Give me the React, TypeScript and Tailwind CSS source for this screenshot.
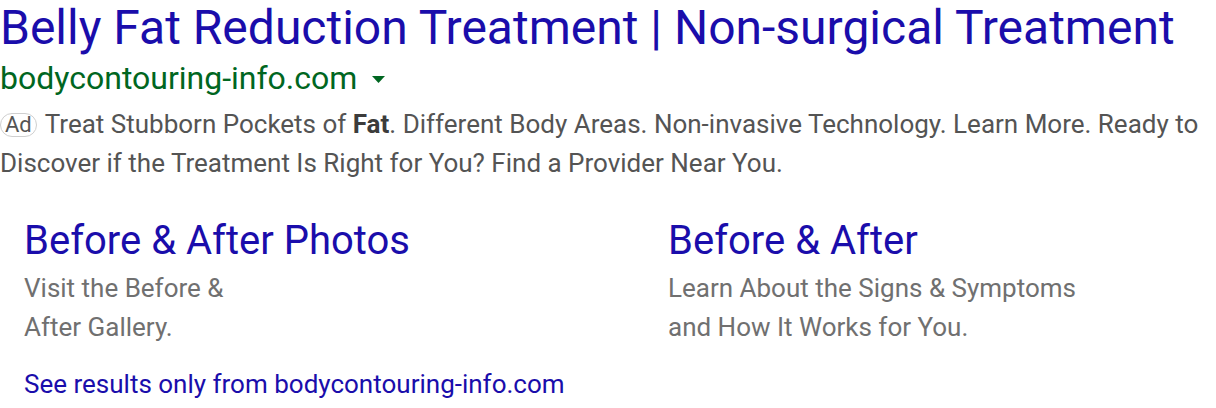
const Sitelink = ({ title, lines }: { title: string; lines: string[] }) => (
  <div className="flex flex-col">
    <a href="#" className="text-[40px] leading-[48px] text-[#1a0dab]">
      {title}
    </a>
    <p className="mt-[4px] text-[26px] leading-[39px] text-[#707070]">
      {lines.map((l, i) => (
        <span key={i} className="block">
          {l}
        </span>
      ))}
    </p>
  </div>
);

export default function App() {
  return (
    <div className="w-[1216px] h-[408px] bg-white overflow-hidden font-['Roboto',sans-serif]">
      <a href="#" className="block text-[48px] leading-[56px] text-[#1a0dab] whitespace-nowrap">
        Belly Fat Reduction Treatment | Non-surgical Treatment
      </a>
      <div className="flex items-center text-[32px] leading-[44px] text-[#006621]">
        <span>bodycontouring-info.com</span>
        <svg width="13" height="7" viewBox="0 0 13 7" className="ml-[15px] mt-[2px]">
          <path d="M0 0H13L6.5 7Z" fill="#006621" />
        </svg>
      </div>
      <p className="mt-[5px] w-[1210px] text-[26px] leading-[39px] text-[#545454]">
        <span className="mr-[8px] inline-block rounded-[12px] border border-[#cfcfcf] px-[4px] text-[22px] leading-[22px] text-[#545454] align-[1px]">
          Ad
        </span>
        Treat Stubborn Pockets of <b className="font-bold text-[#3c3c3c]">Fat</b>. Different Body Areas. Non-invasive Technology. Learn More. Ready to
        Discover if the Treatment Is Right for You? Find a Provider Near You.
      </p>
      <div className="mt-[34px] grid grid-cols-[644px_1fr] pl-[24px]">
        <Sitelink title="Before & After Photos" lines={["Visit the Before &", "After Gallery."]} />
        <Sitelink
          title="Before & After"
          lines={["Learn About the Signs & Symptoms", "and How It Works for You."]}
        />
      </div>
      <a href="#" className="mt-[21px] ml-[24px] block text-[26px] leading-[32px] text-[#1a0dab]">
        See results only from bodycontouring-info.com
      </a>
    </div>
  );
}
